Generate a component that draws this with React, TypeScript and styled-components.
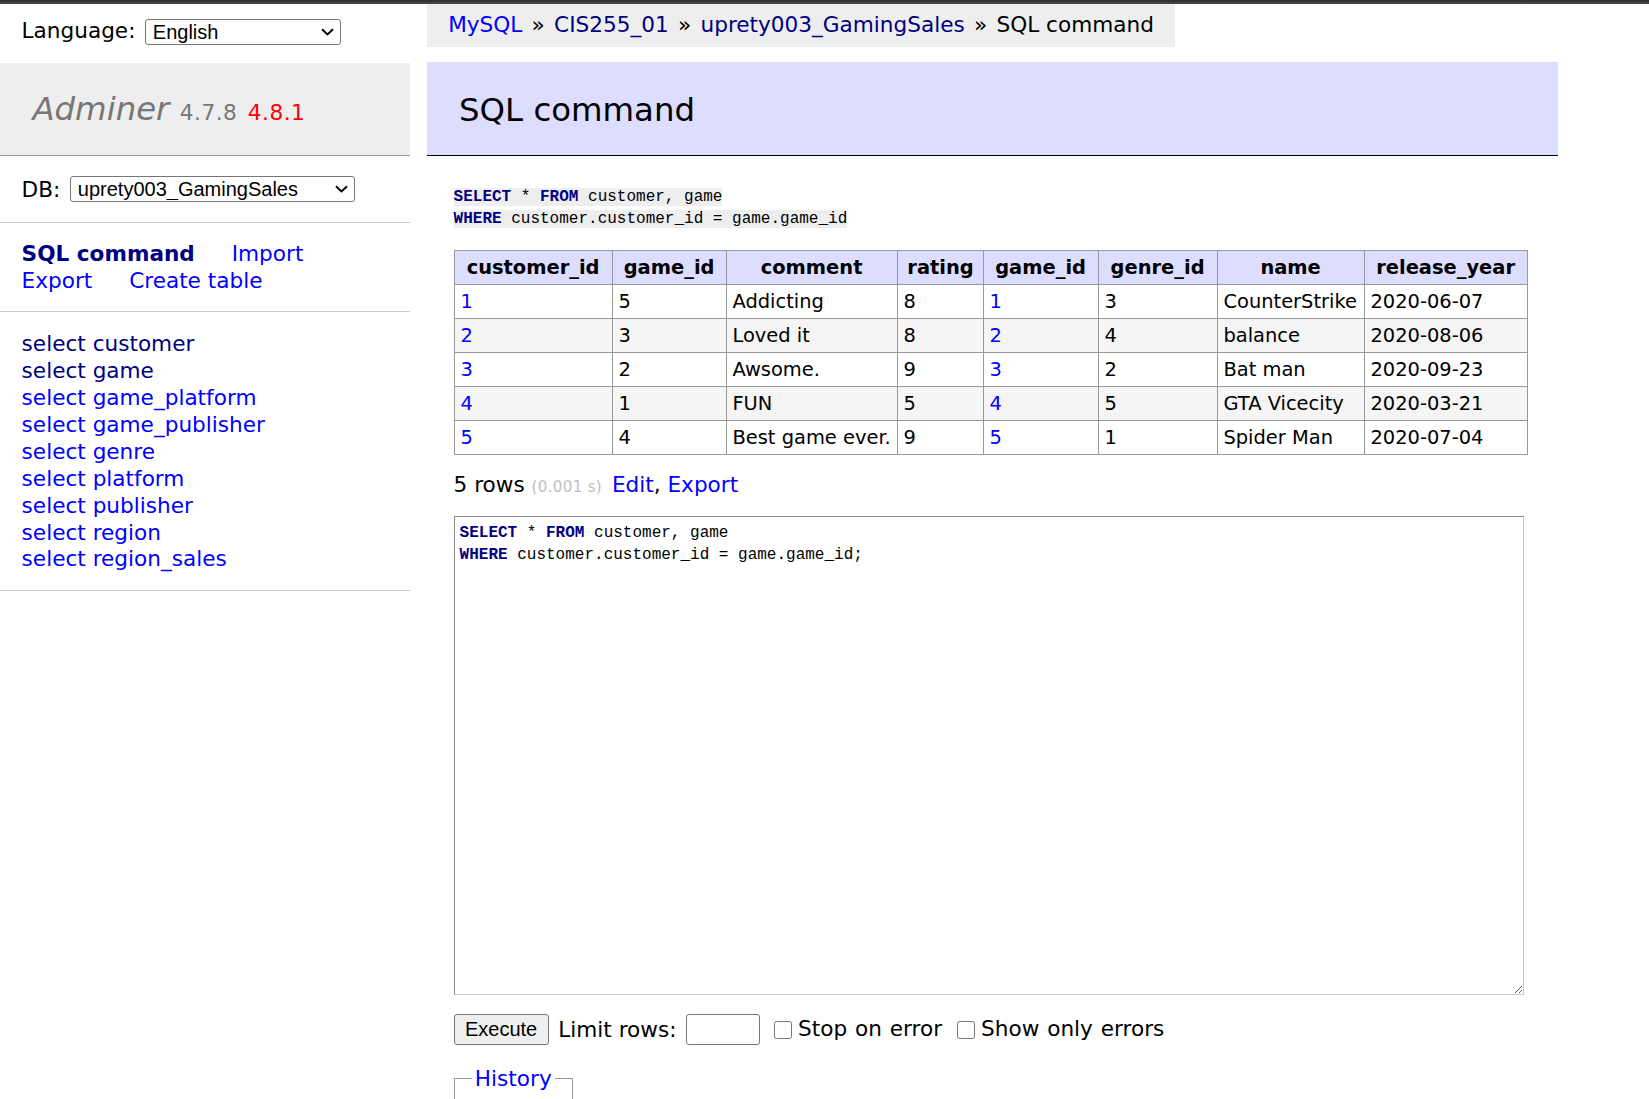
import React from "react";
import styled, { createGlobalStyle } from "styled-components";

const GlobalStyle = createGlobalStyle`
  html, body { margin: 0; padding: 0; overflow: hidden; }
  body {
    background: #fff;
    color: #000;
    font-family: "DejaVu Sans", Verdana, sans-serif;
    font-size: 21.6px;
    line-height: 1.25;
  }
`;

const TopStrip = styled.div`
  height: 4px;
  background: linear-gradient(#2b2b2b, #4a4a4a);
`;

const Layout = styled.div`
  display: flex;
  align-items: flex-start;
`;

const Sidebar = styled.aside`
  flex: 0 0 426.6px;
`;

const SideInner = styled.div`
  width: 410.4px;
`;

const LangBar = styled.div`
  height: 30.72px;
  padding: 8px 21.6px 4.48px;
  line-height: 38.88px;
  white-space: nowrap;
`;

const SelectBox = styled.span<{ $w: number }>`
  position: relative;
  display: inline-block;
  width: ${(p) => p.$w}px;
  height: 26px;
  margin-left: 2.5px;
  vertical-align: middle;
  line-height: 0;
`;

const Select = styled.select`
  appearance: none;
  -webkit-appearance: none;
  width: 100%;
  height: 100%;
  margin: 0;
  padding: 0 24px 0 7px;
  font: 20px "Liberation Sans", Arial, sans-serif;
  color: #000;
  background: #fff;
  border: 1px solid #767676;
  border-radius: 3px;
  box-sizing: border-box;
`;

const Chevron = styled.svg`
  position: absolute;
  right: 7px;
  top: 9px;
  width: 13px;
  height: 8px;
  pointer-events: none;
`;

const Menu = styled.nav`
  margin-top: 15.8px;
`;

const Logo = styled.h1`
  margin: 0;
  padding: 26.5px 32.4px 25.34px;
  font-size: 32.4px;
  line-height: 40.5px;
  font-weight: normal;
  color: #777;
  background: #eee;
  border-bottom: 1px solid #999;
  white-space: nowrap;
`;

const LogoLink = styled.a`
  color: #777;
  font-style: italic;
  text-decoration: none;
`;

const Version = styled.span<{ $latest?: boolean }>`
  font-size: 67%;
  line-height: 1;
  letter-spacing: 0.5px;
  color: ${(p) => (p.$latest ? "#f00" : "#777")};
`;

const SideBlock = styled.div`
  padding: 18.28px 21.6px 16.28px;
  border-bottom: 1px solid #ccc;
`;

const DbRow = styled.div`
  display: flex;
  align-items: center;
  height: 31px;
  padding: 17.28px 21.6px;
  border-bottom: 1px solid #ccc;
  white-space: nowrap;
`;

const DbLabel = styled.span`
  margin-right: 7px;
  padding-top: 2px;
`;

const Link = styled.a<{ $visited?: boolean; $active?: boolean }>`
  color: ${(p) => (p.$visited ? "#000080" : "#0000ff")};
  font-weight: ${(p) => (p.$active ? "bold" : "normal")};
  text-decoration: none;
`;

const MenuLink = styled(Link)`
  white-space: nowrap;
  margin-right: 30px;
`;

const TableList = styled.ul`
  margin: 0;
  padding: 18.28px 21.6px 16.28px;
  border-bottom: 1px solid #ccc;
  list-style: none;
  white-space: nowrap;
`;

const Main = styled.main`
  width: 1131px;
  flex: none;
`;

const Breadcrumb = styled.div`
  width: fit-content;
  height: 43.2px;
  padding: 0 21.6px;
  line-height: 42px;
  background: #eee;
  white-space: nowrap;
`;

const Sep = styled.span`
  margin: 0 2.4px;
`;

const Content = styled.div`
  padding: 15px 0 0 27px;
`;

const Title = styled.h2`
  margin: 0 0 30px -27px;
  padding: 27.6px 32.4px 24.24px;
  font-size: 32.4px;
  line-height: 40.5px;
  font-weight: normal;
  color: #000;
  background: #ddf;
  border-bottom: 1px solid #000;
`;

const Query = styled.pre`
  margin: 0;
  padding-top: 1.5px;
  font-family: "Liberation Mono", "DejaVu Sans Mono", monospace;
  font-size: 16px;
  line-height: 21.94px;
`;

const Code = styled.code`
  background: #eee;
  font: inherit;
`;

const Kw = styled.span`
  color: #000080;
  font-weight: bold;
`;

const ResultTable = styled.table`
  margin: 19px 0 0;
  border-collapse: collapse;
  table-layout: fixed;
  width: 1073px;
  font-size: 19.44px;
  line-height: 24.3px;
`;

const Col = styled.col<{ $w: number }>`
  width: ${(p) => p.$w}px;
`;

const HeadCell = styled.th`
  border: 1px solid #999;
  padding: 5.5px 9.72px 3.5px;
  background: #ddf;
  font-weight: bold;
  text-align: center;
  white-space: nowrap;
  overflow: hidden;
`;

const Row = styled.tr<{ $odd: boolean }>`
  background: ${(p) => (p.$odd ? "#f5f5f5" : "#fff")};
`;

const Cell = styled.td`
  border: 1px solid #999;
  padding: 5.3px 5.83px 3.3px;
  text-align: left;
  white-space: nowrap;
  overflow: hidden;
`;

const Summary = styled.p`
  margin: 16.5px 0 0;
  line-height: 27px;
`;

const Time = styled.span`
  color: silver;
  font-size: 15.12px;
  letter-spacing: 0.3px;
  margin-right: 3px;
`;

const Editor = styled.pre`
  box-sizing: border-box;
  width: 1070px;
  height: 479px;
  margin: 14.8px 0 0;
  padding: 6px 5px 4px;
  font-family: "Liberation Mono", "DejaVu Sans Mono", monospace;
  font-size: 16px;
  line-height: 21.94px;
  border: 1px solid;
  border-color: #8a8a8a #c8c8c8 #c8c8c8 #8a8a8a;
  background: #fff;
  overflow: auto;
  resize: both;
`;

const Controls = styled.div`
  display: flex;
  align-items: center;
  height: 35px;
  margin-top: 17.28px;
  white-space: nowrap;
`;

const Button = styled.button`
  box-sizing: border-box;
  width: 95px;
  height: 31px;
  padding: 0;
  font: 20px "Liberation Sans", Arial, sans-serif;
  color: #000;
  background: #efefef;
  border: 1px solid #767676;
  border-radius: 3px;
`;

const ControlText = styled.span<{ $ml: number; $mr: number }>`
  margin-left: ${(p) => p.$ml}px;
  margin-right: ${(p) => p.$mr}px;
  padding-top: 2px;
`;

const LimitInput = styled.input`
  box-sizing: border-box;
  width: 74px;
  height: 31px;
  margin: 0;
  padding: 0 4px;
  font: 20px "Liberation Sans", Arial, sans-serif;
  border: 1px solid #767676;
  border-radius: 3px;
`;

const CheckLabel = styled.label<{ $ml: number }>`
  display: inline-flex;
  align-items: center;
  margin-left: ${(p) => p.$ml}px;
  word-spacing: 1px;
`;

const Checkbox = styled.input`
  width: 18px;
  height: 18px;
  margin: 0 6px 0 0;
`;

const History = styled.fieldset`
  display: inline-block;
  margin: 17.5px 0 0;
  padding: 10.8px 17.28px;
  min-height: 40px;
  border: 1px solid #999;
`;

const Legend = styled.legend`
  padding: 0 3px;
  line-height: 27px;
`;

const rows: (string | number)[][] = [
  [1, 5, "Addicting", 8, 1, 3, "CounterStrike", "2020-06-07"],
  [2, 3, "Loved it", 8, 2, 4, "balance", "2020-08-06"],
  [3, 2, "Awsome.", 9, 3, 2, "Bat man", "2020-09-23"],
  [4, 1, "FUN", 5, 4, 5, "GTA Vicecity", "2020-03-21"],
  [5, 4, "Best game ever.", 9, 5, 1, "Spider Man", "2020-07-04"],
];

const headers = ["customer_id", "game_id", "comment", "rating", "game_id", "genre_id", "name", "release_year"];
const colWidths = [158, 114, 171, 86, 115, 119, 147, 163];
const linkCols = [0, 4];

const tables: { name: string; visited: boolean }[] = [
  { name: "customer", visited: true },
  { name: "game", visited: true },
  { name: "game_platform", visited: false },
  { name: "game_publisher", visited: false },
  { name: "genre", visited: false },
  { name: "platform", visited: false },
  { name: "publisher", visited: false },
  { name: "region", visited: false },
  { name: "region_sales", visited: false },
];

const SqlText: React.FC<{ semicolon?: boolean }> = ({ semicolon }) => (
  <>
    <Kw>SELECT</Kw> * <Kw>FROM</Kw> customer, game
    {"\n"}
    <Kw>WHERE</Kw> customer.customer_id = game.game_id{semicolon ? ";" : ""}
  </>
);

const DropSelect: React.FC<{ width: number; label: string }> = ({ width, label }) => (
  <SelectBox $w={width}>
    <Select defaultValue="v">
      <option value="v">{label}</option>
    </Select>
    <Chevron viewBox="0 0 13 8">
      <path d="M1 1.2 L6.5 6.5 L12 1.2" fill="none" stroke="#000" strokeWidth="1.9" />
    </Chevron>
  </SelectBox>
);

export default function App() {
  return (
    <>
      <GlobalStyle />
      <TopStrip />
      <Layout>
        <Sidebar>
          <SideInner>
            <LangBar>
              Language: <DropSelect width={196} label="English" />
            </LangBar>
            <Menu>
              <Logo>
                <LogoLink href="#">Adminer</LogoLink> <Version>4.7.8</Version>{" "}
                <Version $latest>4.8.1</Version>
              </Logo>
              <DbRow>
                <DbLabel>DB:</DbLabel>
                <DropSelect width={285} label="uprety003_GamingSales" />
              </DbRow>
              <SideBlock>
                <MenuLink href="#" $visited $active>
                  SQL command
                </MenuLink>{" "}
                <MenuLink href="#">Import</MenuLink>{" "}
                <MenuLink href="#">Export</MenuLink>{" "}
                <MenuLink href="#">Create table</MenuLink>
              </SideBlock>
              <TableList>
                {tables.map((t) => (
                  <li key={t.name}>
                    <Link href="#" $visited={t.visited}>
                      select {t.name}
                    </Link>
                  </li>
                ))}
              </TableList>
            </Menu>
          </SideInner>
        </Sidebar>
        <Main>
          <Breadcrumb>
            <Link href="#">MySQL</Link> <Sep>»</Sep> <Link href="#" $visited>CIS255_01</Link> <Sep>»</Sep>{" "}
            <Link href="#" $visited>uprety003_GamingSales</Link> <Sep>»</Sep> SQL command
          </Breadcrumb>
          <Content>
            <Title>SQL command</Title>
            <Query>
              <Code>
                <SqlText />
              </Code>
            </Query>
            <ResultTable>
              <colgroup>
                {colWidths.map((w, i) => (
                  <Col key={i} $w={w} />
                ))}
              </colgroup>
              <thead>
                <tr>
                  {headers.map((h, i) => (
                    <HeadCell key={i}>{h}</HeadCell>
                  ))}
                </tr>
              </thead>
              <tbody>
                {rows.map((r, ri) => (
                  <Row key={ri} $odd={ri % 2 === 1}>
                    {r.map((v, ci) => (
                      <Cell key={ci}>{linkCols.includes(ci) ? <Link href="#">{v}</Link> : v}</Cell>
                    ))}
                  </Row>
                ))}
              </tbody>
            </ResultTable>
            <Summary>
              5 rows <Time>(0.001 s)</Time> <Link href="#">Edit</Link>, <Link href="#">Export</Link>
            </Summary>
            <Editor>
              <SqlText semicolon />
            </Editor>
            <Controls>
              <Button type="button">Execute</Button>
              <ControlText $ml={9.7} $mr={9.3}>
                Limit rows:
              </ControlText>
              <LimitInput type="number" />
              <CheckLabel $ml={14.3}>
                <Checkbox type="checkbox" />
                Stop on error
              </CheckLabel>
              <CheckLabel $ml={15}>
                <Checkbox type="checkbox" />
                Show only errors
              </CheckLabel>
            </Controls>
            <History>
              <Legend>
                <Link href="#">History</Link>
              </Legend>
            </History>
          </Content>
        </Main>
      </Layout>
    </>
  );
}
